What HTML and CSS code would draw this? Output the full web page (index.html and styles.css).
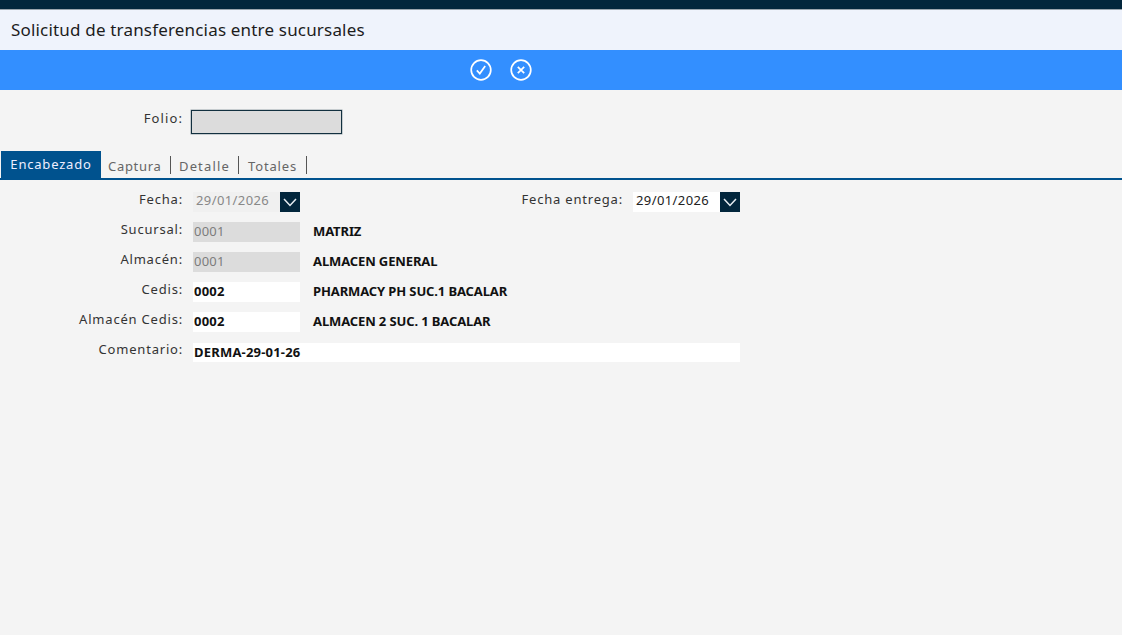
FILE: index.html
```html
<!DOCTYPE html>
<html lang="es">
<head>
<meta charset="utf-8">
<title>Solicitud de transferencias entre sucursales</title>
<link rel="stylesheet" href="styles.css">
</head>
<body>
<div class="topbar"></div>
<header class="title">Solicitud de transferencias entre sucursales</header>
<nav class="toolbar">
  <svg class="icon" viewBox="0 0 22 22" width="22" height="22"><circle cx="11" cy="11" r="9.8"/><path d="M6.8 11.4l3 3.2 5.4-7.6"/></svg>
  <svg class="icon" viewBox="0 0 22 22" width="22" height="22"><circle cx="11" cy="11" r="9.8"/><path d="M7.8 7.8l6.4 6.4M14.2 7.8l-6.4 6.4"/></svg>
</nav>
<section class="folio">
  <label class="label">Folio:</label>
  <div class="folio-box"></div>
</section>
<div class="tabs">
  <div class="tab active">Encabezado</div>
  <div class="tab captura">Captura</div>
  <div class="tab detalle">Detalle</div>
  <div class="tab totales">Totales</div>
</div>
<main class="form">
  <div class="row first">
    <label class="label">Fecha:</label>
    <div class="date"><span class="date-value muted">29/01/2026</span><span class="drop"><svg viewBox="0 0 20 20" width="20" height="20"><path d="M4 7l6 6.5L16 7"/></svg></span></div>
    <label class="label second">Fecha entrega:</label>
    <div class="date"><span class="date-value white">29/01/2026</span><span class="drop"><svg viewBox="0 0 20 20" width="20" height="20"><path d="M4 7l6 6.5L16 7"/></svg></span></div>
  </div>
  <div class="row"><label class="label">Sucursal:</label><div class="field off">0001</div><div class="desc">MATRIZ</div></div>
  <div class="row"><label class="label">Almacén:</label><div class="field off">0001</div><div class="desc">ALMACEN GENERAL</div></div>
  <div class="row"><label class="label">Cedis:</label><div class="field">0002</div><div class="desc">PHARMACY PH SUC.1 BACALAR</div></div>
  <div class="row"><label class="label">Almacén Cedis:</label><div class="field">0002</div><div class="desc">ALMACEN 2 SUC. 1 BACALAR</div></div>
  <div class="row"><label class="label">Comentario:</label><div class="field wide">DERMA-29-01-26</div></div>
</main>
</body>
</html>
```
FILE: styles.css
```css
* { box-sizing: border-box; }
html, body { margin: 0; height: 100%; overflow: hidden; }
body { background: #f4f4f4; font-family: "Noto Sans", "Open Sans", sans-serif; color: #222; }
.topbar { height: 10px; background: #02263c; border-bottom: 1px solid #9aa4ad; }
.title { height: 40px; background: #eff3fc; color: #1c1c1c; font-size: 17px; line-height: 40px; padding-left: 11px; letter-spacing: .18px; }
.toolbar { height: 40px; background: #338fff; display: flex; justify-content: center; align-items: center; gap: 18px; padding-right: 121px; }
.icon { fill: none; stroke: #fff; stroke-width: 1.7; }
.label { display: block; width: 183px; text-align: right; font-size: 13px; line-height: 18px; letter-spacing: .8px; color: #333; flex: none; }
.folio { display: flex; padding-top: 20px; height: 61px; }
.folio .label { margin-top: -1px; letter-spacing: 1.1px; }
.folio-box { width: 151px; height: 24px; margin-left: 8px; background: #dcdcdc; border: 1px solid #12303f; box-shadow: 0 0 0 .5px #12303f66; }
.tabs { display: flex; height: 29px; border-bottom: 2px solid #00528e; padding-left: 1px; }
.tab { height: 27px; font-size: 13px; line-height: 30px; letter-spacing: .85px; color: #666; position: relative; white-space: nowrap; }
.tab::after { content: ""; position: absolute; right: 0; top: 5px; height: 18px; width: 1px; background: #555; }
.tab.captura { width: 70px; padding-left: 7px; letter-spacing: .7px; }
.tab.detalle { width: 68px; padding-left: 8px; letter-spacing: 1.15px; }
.tab.totales { width: 68px; padding-left: 9px; }
.tab.active { width: 100px; text-align: center; background: #00528e; color: #eef; line-height: 26px; letter-spacing: .8px; }
.tab.active::after { display: none; }
.form { padding-top: 12px; display: flex; flex-direction: column; gap: 10px; }
.row { display: flex; height: 20px; }
.row .label { margin-top: -2px; }
.row .label.second { width: 323px; }
.date { display: flex; width: 107px; margin-left: 10px; height: 20px; flex: none; }
.date-value { width: 87px; font-size: 13px; line-height: 17px; padding-left: 3px; letter-spacing: .4px; }
.date-value.muted { color: #888; background: #f0f0f0; }
.date-value.white { color: #222; background: #fff; }
.drop { width: 20px; height: 20px; background: #02263c; }
.drop svg { display: block; fill: none; stroke: #e8eef2; stroke-width: 1.5; }
.field { width: 107px; margin-left: 10px; background: #fff; font-size: 13px; font-weight: 700; line-height: 18px; color: #111; white-space: nowrap; letter-spacing: .2px; flex: none; padding-left: 1px; }
.field.off { background: #dcdcdc; color: #7c7c7c; font-weight: 400; }
.field.wide { width: 547px; height: 19px; margin-top: 1px; }
.desc { margin-left: 13px; font-size: 13px; font-weight: 700; line-height: 18px; color: #111; letter-spacing: -.12px; white-space: nowrap; }
```
